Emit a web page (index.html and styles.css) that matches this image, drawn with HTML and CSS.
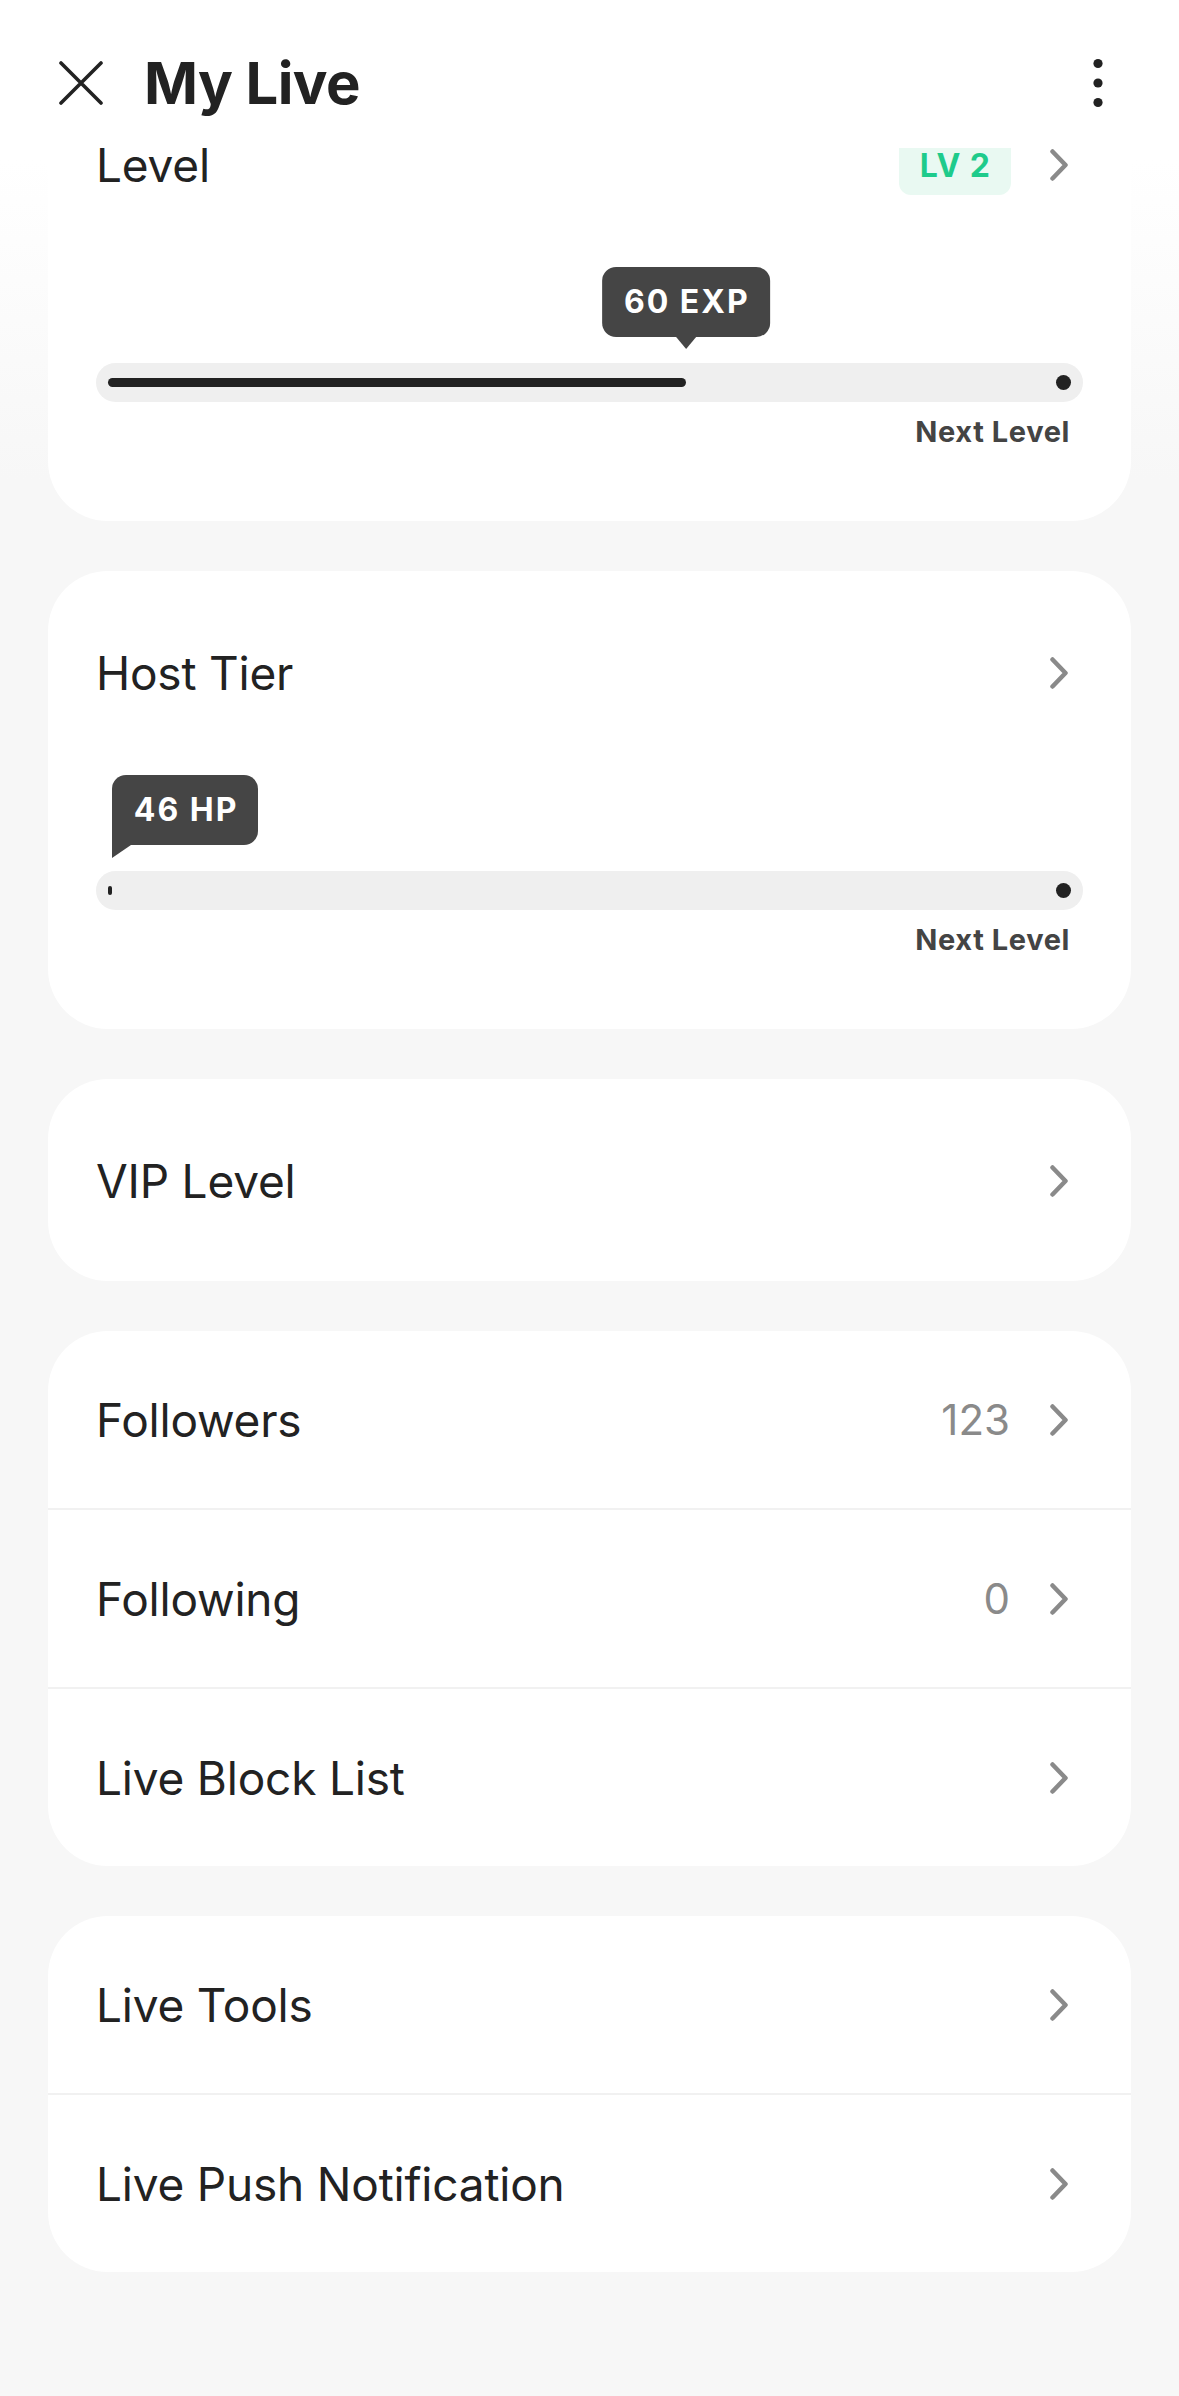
FILE: index.html
```html
<!DOCTYPE html>
<html lang="en">
<head>
<meta charset="utf-8">
<title>My Live</title>
<link rel="stylesheet" href="styles.css">
</head>
<body>
<header class="topbar">
  <button class="icon-btn close" aria-label="Close">
    <svg width="44" height="44" viewBox="0 0 44 44"><path d="M2 2 L42 42 M42 2 L2 42" fill="none" stroke="#222" stroke-width="3.6" stroke-linecap="round"/></svg>
  </button>
  <h1 class="title">My Live</h1>
  <button class="icon-btn more" aria-label="More">
    <svg width="24" height="60" viewBox="0 0 24 60"><circle cx="12" cy="10.5" r="4.6" fill="#222"/><circle cx="12" cy="30" r="4.6" fill="#222"/><circle cx="12" cy="49.5" r="4.6" fill="#222"/></svg>
  </button>
</header>

<main class="content">
  <section class="card card-pad">
    <div class="row-head">
      <span class="label">Level</span>
      <span class="badge">LV 2</span>
      <svg class="chev" viewBox="0 0 20 32"><path d="M2.5 2.5 L15.5 16 L2.5 29.5" fill="none" stroke="#8a8a8a" stroke-width="4.5" stroke-linecap="round" stroke-linejoin="round"/></svg>
    </div>
    <div class="progress">
      <div class="rail"><div class="tip tip-center" style="left:60%">60 EXP</div></div>
      <div class="track"><div class="bar"><div class="fill" style="width:60%"></div><span class="dot"></span></div></div>
      <div class="next">Next Level</div>
    </div>
  </section>

  <section class="card card-pad">
    <div class="row-head">
      <span class="label">Host Tier</span>
      <svg class="chev" viewBox="0 0 20 32"><path d="M2.5 2.5 L15.5 16 L2.5 29.5" fill="none" stroke="#8a8a8a" stroke-width="4.5" stroke-linecap="round" stroke-linejoin="round"/></svg>
    </div>
    <div class="progress">
      <div class="rail"><div class="tip tip-start" style="left:0.4%">46 HP</div></div>
      <div class="track"><div class="bar"><div class="fill" style="width:0.4%"></div><span class="dot"></span></div></div>
      <div class="next">Next Level</div>
    </div>
  </section>

  <section class="card card-pad">
    <div class="row-head">
      <span class="label">VIP Level</span>
      <svg class="chev" viewBox="0 0 20 32"><path d="M2.5 2.5 L15.5 16 L2.5 29.5" fill="none" stroke="#8a8a8a" stroke-width="4.5" stroke-linecap="round" stroke-linejoin="round"/></svg>
    </div>
  </section>

  <section class="card list">
    <div class="list-row">
      <span class="label">Followers</span>
      <span class="value">123</span>
      <svg class="chev" viewBox="0 0 20 32"><path d="M2.5 2.5 L15.5 16 L2.5 29.5" fill="none" stroke="#8a8a8a" stroke-width="4.5" stroke-linecap="round" stroke-linejoin="round"/></svg>
    </div>
    <div class="list-row">
      <span class="label">Following</span>
      <span class="value">0</span>
      <svg class="chev" viewBox="0 0 20 32"><path d="M2.5 2.5 L15.5 16 L2.5 29.5" fill="none" stroke="#8a8a8a" stroke-width="4.5" stroke-linecap="round" stroke-linejoin="round"/></svg>
    </div>
    <div class="list-row">
      <span class="label">Live Block List</span>
      <svg class="chev" viewBox="0 0 20 32"><path d="M2.5 2.5 L15.5 16 L2.5 29.5" fill="none" stroke="#8a8a8a" stroke-width="4.5" stroke-linecap="round" stroke-linejoin="round"/></svg>
    </div>
  </section>

  <section class="card list">
    <div class="list-row">
      <span class="label">Live Tools</span>
      <svg class="chev" viewBox="0 0 20 32"><path d="M2.5 2.5 L15.5 16 L2.5 29.5" fill="none" stroke="#8a8a8a" stroke-width="4.5" stroke-linecap="round" stroke-linejoin="round"/></svg>
    </div>
    <div class="list-row">
      <span class="label">Live Push Notification</span>
      <svg class="chev" viewBox="0 0 20 32"><path d="M2.5 2.5 L15.5 16 L2.5 29.5" fill="none" stroke="#8a8a8a" stroke-width="4.5" stroke-linecap="round" stroke-linejoin="round"/></svg>
    </div>
  </section>
</main>
</body>
</html>
```

FILE: styles.css
```css
* {
  box-sizing: border-box;
}

html {
  background: #f7f7f7;
}

body {
  margin: 0;
  min-height: 2396px;
  font-family: Inter, "Noto Sans", "Liberation Sans", sans-serif;
  color: #222;
  background-image: linear-gradient(180deg, #ffffff 0px, #ffffff 160px, #f7f7f7 480px);
  background-repeat: no-repeat;
  background-size: 100% 480px;
}

/* ---------- top bar ---------- */
.topbar {
  position: fixed;
  top: 0;
  left: 0;
  right: 0;
  height: 148px;
  z-index: 10;
  background: #fff;
  display: flex;
  align-items: center;
  padding: 53px 69px 35px 59px;
}

.icon-btn {
  border: 0;
  background: none;
  padding: 0;
  margin: 0;
  display: flex;
  align-items: center;
  justify-content: center;
}

.title {
  margin: 0 0 0 41px;
  font-size: 58px;
  line-height: 60px;
  font-weight: 700;
  letter-spacing: -0.6px;
  color: #222;
}

.more {
  margin-left: auto;
}

/* ---------- content ---------- */
.content {
  display: flex;
  flex-direction: column;
  gap: 50px;
  padding: 63px 48px 100px;
}

.card {
  background: #fff;
  border-radius: 60px;
  overflow: hidden;
}

.card-pad {
  padding: 48px 48px 46px;
}

.row-head {
  height: 108px;
  display: flex;
  align-items: center;
}

.label {
  flex: 1;
  font-size: 46px;
  line-height: 56px;
  font-weight: 400;
  letter-spacing: -0.2px;
  color: #222;
  white-space: nowrap;
}

.badge {
  height: 59px;
  line-height: 59px;
  padding: 0 20px 0 21px;
  border-radius: 12px;
  background: #e9f9f2;
  color: #1ecb8b;
  font-size: 32px;
  font-weight: 700;
  letter-spacing: 1px;
}

.chev {
  flex: none;
  width: 20px;
  height: 32px;
  margin-left: 39px;
  margin-right: 13px;
}

/* ---------- progress ---------- */
.progress {
  margin-top: 48px;
  margin-bottom: 25px;
}

.rail {
  position: relative;
  height: 96px;
  margin: 0 12px;
}

.tip {
  position: absolute;
  top: 0;
  height: 70px;
  line-height: 70px;
  padding: 0 20px 0 22px;
  border-radius: 14px;
  background: #454545;
  color: #fff;
  font-size: 32px;
  font-weight: 700;
  letter-spacing: 2px;
  white-space: nowrap;
}

.tip::after {
  content: "";
  position: absolute;
  top: 100%;
  width: 0;
  height: 0;
}

.tip-center {
  transform: translateX(-50%);
}

.tip-center::after {
  left: 50%;
  margin-left: -10px;
  border-left: 10px solid transparent;
  border-right: 10px solid transparent;
  border-top: 12px solid #454545;
}

.tip-start {
  border-bottom-left-radius: 0;
}

.tip-start::after {
  left: 0;
  border-top: 13px solid #454545;
  border-right: 19px solid transparent;
}

.track {
  height: 39px;
  padding: 15px 12px;
  border-radius: 20px;
  background: #efefef;
}

.bar {
  position: relative;
  height: 9px;
}

.fill {
  height: 9px;
  border-radius: 5px;
  background: #222;
}

.dot {
  position: absolute;
  right: 0;
  top: 50%;
  width: 15px;
  height: 15px;
  margin-top: -7.5px;
  border-radius: 50%;
  background: #222;
}

.next {
  margin-top: 12px;
  padding-right: 13px;
  text-align: right;
  font-size: 29px;
  line-height: 36px;
  font-weight: 700;
  letter-spacing: 0.6px;
  color: #444;
}

/* ---------- list cards ---------- */
.list-row {
  height: 177px;
  display: flex;
  align-items: center;
  padding: 0 48px;
}

.list-row + .list-row {
  height: 179px;
  border-top: 2px solid #f1f1f1;
}

.value {
  font-size: 42px;
  line-height: 56px;
  color: #8a8a8a;
}

.value + .chev {
  margin-left: 40px;
}
```
